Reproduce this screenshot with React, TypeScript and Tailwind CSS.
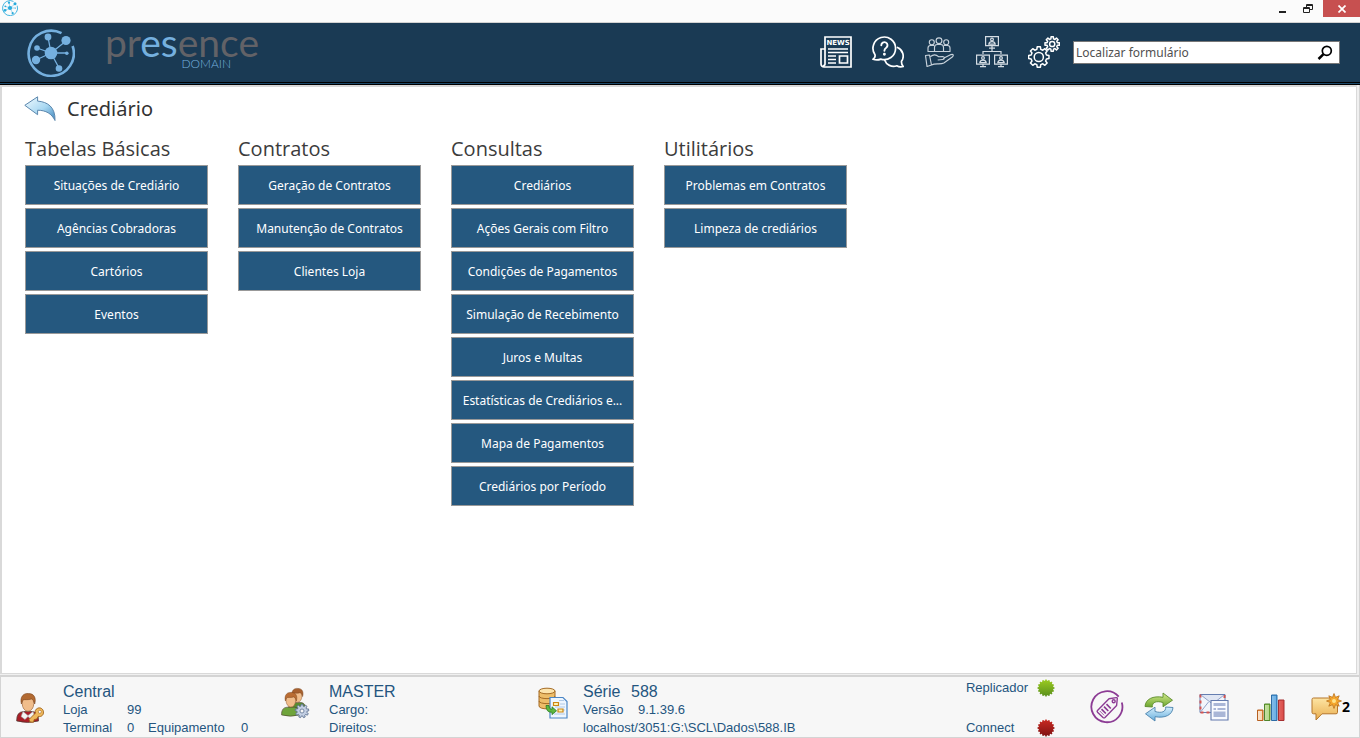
import React from "react";

const columns = [
  {
    title: "Tabelas Básicas",
    items: ["Situações de Crediário", "Agências Cobradoras", "Cartórios", "Eventos"],
  },
  {
    title: "Contratos",
    items: ["Geração de Contratos", "Manutenção de Contratos", "Clientes Loja"],
  },
  {
    title: "Consultas",
    items: [
      "Crediários",
      "Ações Gerais com Filtro",
      "Condições de Pagamentos",
      "Simulação de Recebimento",
      "Juros e Multas",
      "Estatísticas de Crediários e...",
      "Mapa de Pagamentos",
      "Crediários por Período",
    ],
  },
  {
    title: "Utilitários",
    items: ["Problemas em Contratos", "Limpeza de crediários"],
  },
];

function Emblem({ className, color }: { className: string; color: string }) {
  return (
    <svg viewBox="0 0 48 48" className={className} fill="none" stroke={color} aria-hidden="true">
      <path d="M34.5 4.2A22.6 22.6 0 1 0 45.6 17" strokeWidth="2.6" />
      <path d="M24 24 21 8M24 24 39 12M24 24 10 19M24 24 9 31M24 24 32 39M24 24H40" strokeWidth="1.3" />
      <g fill={color} stroke="none">
        <circle cx="24" cy="24" r="6.3" />
        <circle cx="21" cy="8" r="3.4" />
        <circle cx="39" cy="11.5" r="4.6" />
        <circle cx="10" cy="19" r="2.8" />
        <circle cx="9" cy="31" r="4.2" />
        <circle cx="32" cy="39.5" r="3.3" />
        <circle cx="39.8" cy="24.3" r="1.8" />
      </g>
    </svg>
  );
}

function NewsIcon() {
  return (
    <svg viewBox="0 0 32 32" className="size-8" fill="none" stroke="#fff" strokeWidth="1.7" aria-hidden="true">
      <path d="M5 28V1h26v30H4a3 3 0 0 1-3-3V13h4v15a1.5 1.5 0 0 1-2 1.5" />
      <path d="M8 13h20M8 16.5h20M8 20h8M8 23.5h8M8 27h8" strokeWidth="1.4" />
      <path d="M19.5 20h8v7h-8z" />
      <text x="18.2" y="9.3" textAnchor="middle" fill="#fff" stroke="none" fontFamily="DejaVu Sans, sans-serif" fontWeight="700" fontSize="7">NEWS</text>
    </svg>
  );
}

function HelpIcon() {
  return (
    <svg viewBox="0 0 32 32" className="size-8" fill="none" stroke="#fff" strokeWidth="1.7" strokeLinejoin="round" strokeLinecap="round" aria-hidden="true">
      <path d="M1 23.3c1.7-1.1 2.4-2.8 2-4.5a11.3 11.3 0 1 1 5.8 4.3c-2.3 1-5.2 1-7.8.2Z" />
      <path d="M25.5 11.5a9.2 9.2 0 0 1 4 13.8c-.2 2.4.5 4 1.8 5.2-2.5.7-4.6.4-6.5-.7a9.6 9.6 0 0 1-12.3-6" />
      <path d="M9.3 9.3a3.1 3.1 0 1 1 4.9 2.5c-1.2.8-1.8 1.5-1.8 3" strokeWidth="1.9" />
      <circle cx="12.4" cy="18.3" r=".6" fill="#fff" />
    </svg>
  );
}

function PartnersIcon() {
  return (
    <svg viewBox="0 0 32 32" className="size-8" fill="none" stroke="#c9d3dc" strokeWidth="1.15" strokeLinejoin="round" aria-hidden="true">
      <circle cx="15" cy="4.700" r="2.900" />
      <circle cx="7.800" cy="6.200" r="2.500" />
      <circle cx="22.200" cy="6.200" r="2.500" />
      <path d="M10.500 15.500v-4.200q0-2.800 3-2.800h3q3 0 3 2.800v4.200Z" />
      <path d="M10.500 15.500H4v-3.600q0-2.400 2.500-2.400h3.700M19.500 15.500H26v-3.600q0-2.400-2.500-2.400h-3.700" />
      <path d="M1.500 19.500l4-.5 2 10-4.500 1.500ZM6.500 20.500c3-2.300 6-1.800 8 .2l4-.2c2.500 0 2.300 2.800.2 3l-5 .5M19 22.400l8-3.800c2.500-.8 3 1.200 1.300 2.400l-8.500 6c-3.500 2-8.300-.3-12.300 2" />
    </svg>
  );
}

function Monitor({ x, y }: { x: number; y: number }) {
  return (
    <g transform={`translate(${x} ${y})`}>
      <path d="M.6.6h12.800v9H.6ZM4 12.200h6M7 9.600v2.600" />
      <circle cx="7" cy="3.500" r="1.400" />
      <path d="M3.800 8.200q.4-2.600 3.200-2.600t3.200 2.600Z" />
    </g>
  );
}

function NetworkIcon() {
  return (
    <svg viewBox="0 0 32 32" className="size-8" fill="none" stroke="#d5dde4" strokeWidth="1.2" aria-hidden="true">
      <Monitor x={9} y={0} />
      <Monitor x={0} y={18.5} />
      <Monitor x={18} y={18.5} />
      <path d="M16 12v3.300M7 18v-2.500h18V18" />
    </svg>
  );
}

function gearPath(cx: number, cy: number, outer: number, inner: number, teeth: number) {
  const step = (Math.PI * 2) / teeth;
  const point = (radius: number, angle: number) =>
    `${(cx + radius * Math.cos(angle)).toFixed(2)} ${(cy + radius * Math.sin(angle)).toFixed(2)}`;
  const parts: string[] = [];
  for (let i = 0; i < teeth; i += 1) {
    const a = i * step - Math.PI / 2;
    parts.push(
      point(inner, a - step * 0.32),
      point(outer, a - step * 0.2),
      point(outer, a + step * 0.2),
      point(inner, a + step * 0.32),
    );
  }
  return `M${parts.join("L")}Z`;
}

function GearsIcon() {
  return (
    <svg viewBox="0 0 32 32" className="size-8" fill="none" stroke="#fff" strokeWidth="1.5" strokeLinejoin="round" aria-hidden="true">
      <path d={gearPath(10.8, 21, 10.3, 7.9, 8)} />
      <circle cx="10.8" cy="21" r="4.6" />
      <path d={gearPath(24.2, 8, 7.3, 5.3, 8)} />
      <circle cx="24.2" cy="8" r="2.6" />
    </svg>
  );
}

function BackIcon() {
  return (
    <svg viewBox="0 0 32 26" className="h-[26px] w-8" aria-hidden="true">
      <defs>
        <linearGradient id="back" x1="0" y1="0" x2="1" y2="1">
          <stop offset="0" stopColor="#f2fbff" />
          <stop offset=".55" stopColor="#a9d8f2" />
          <stop offset="1" stopColor="#3f86bd" />
        </linearGradient>
      </defs>
      <path d="M.8 9.300 13.600.8v4.300C23.500 5.800 31.500 11 31 24.500 27.500 17.500 22 14.300 13.600 14.200v4.500Z" fill="url(#back)" stroke="#5c87ad" strokeWidth="1" strokeLinejoin="round" />
    </svg>
  );
}

function PersonShape({ hair, body }: { hair: string; body: string }) {
  return (
    <g>
      <path d="M.7 28q-.5-9 6.800-9.500h9q6.500.5 6 9.500-11 3-21.800 0Z" fill={body} stroke="#4b3a30" strokeWidth=".7" />
      <ellipse cx="12" cy="10.500" rx="5.800" ry="7.800" fill="#f0bd8b" stroke="#a0683c" strokeWidth=".7" />
      <path d="M5.400 11C3.500 3.500 8-.2 12.500.6c5.500-.3 8 4.400 6.200 10.400-.7-3-1.700-4.500-3.200-5-3.500 1.200-7 .3-8 .8-1 .7-1.600 2-2.100 4.200Z" fill={hair} stroke="#7a4219" strokeWidth=".6" />
    </g>
  );
}

function UserKeyIcon() {
  return (
    <svg viewBox="0 0 30 32" className="h-8 w-[30px]" aria-hidden="true">
      <g transform="translate(1 2)"><PersonShape hair="#b26a32" body="#a91d27" /></g>
      <path d="m8 20.500 5 4 5-4 2 5-4 3-3-3-3 3-4-3Z" fill="#f4f4f4" stroke="#999" strokeWidth=".6" />
      <path d="M20.500 22 14 28.500l1 2.500 3.500.2.700-2.700 2.500-.4 1.500-2.700c3.200.8 5.600-1.500 5.300-4.600-.4-3-3.200-4.800-5.900-3.500-2.300 1-2.800 3-2.100 4.700Z" fill="#eeb85c" stroke="#9f6219" strokeWidth=".9" />
      <circle cx="24.800" cy="20.800" r="1.500" fill="#fff" stroke="#9f6219" strokeWidth=".6" />
    </svg>
  );
}

function UsersIcon() {
  return (
    <svg viewBox="0 0 30 32" className="h-8 w-[30px]" aria-hidden="true">
      <g transform="translate(8 1) scale(.78)"><PersonShape hair="#a7602e" body="#578b2f" /></g>
      <g transform="translate(1 5) scale(.82)"><PersonShape hair="#ba6d33" body="#6fa43b" /></g>
      <path d={gearPath(22, 24, 6.8, 5, 9)} fill="#c3cfe3" stroke="#607493" strokeWidth=".9" />
      <circle cx="22" cy="24" r="2" fill="#f7f7f7" stroke="#607493" strokeWidth=".8" />
    </svg>
  );
}

function DatabaseIcon() {
  return (
    <svg viewBox="0 0 30 32" className="h-8 w-[30px]" aria-hidden="true">
      <path d="M1 4v15c0 3.800 16 3.800 16 0V4Z" fill="#edbd69" stroke="#a56b24" />
      <ellipse cx="9" cy="4" rx="8" ry="2.800" fill="#fce4ad" stroke="#a56b24" />
      <path d="M1 9c0 3.500 16 3.500 16 0M1 14c0 3.500 16 3.500 16 0" fill="none" stroke="#a56b24" />
      <path d="M12 10.500h13l4 4V31H12Z" fill="#eef6ff" stroke="#4b86c6" strokeWidth="1.2" />
      <path d="M21 13.500h5M22 17h5M17 20h10M22 23h5M16 27h11" stroke="#9fbfe1" strokeWidth=".8" />
      <path d="M15.500 15.500h5v3h-5ZM20 22h5v3h-5Z" fill="#fff2b1" stroke="#cc8612" strokeWidth="1.2" />
      <path d="M8 18.500h3q.2 4 3 3.800v-2.500l4.500 4-4.500 3.800v-2.300Q8 25.500 8 18.500Z" fill="#5eb83f" stroke="#267a22" strokeWidth=".8" />
    </svg>
  );
}

function StatusDot({ light, dark, id, label }: { light: string; dark: string; id: string; label: string }) {
  return (
    <svg viewBox="0 0 18 18" className="size-[18px]" role="img" aria-label={label}>
      <defs>
        <linearGradient id={id} x1="0" y1="0" x2="0" y2="1">
          <stop offset="0" stopColor={light} />
          <stop offset="1" stopColor={dark} />
        </linearGradient>
      </defs>
      <path d={gearPath(9, 9, 8.5, 7.4, 16)} fill={`url(#${id})`} />
    </svg>
  );
}

function TagIcon() {
  return (
    <svg viewBox="0 0 34 34" className="size-[34px]" fill="none" stroke="#8c3b94" strokeWidth="1.4" strokeLinejoin="round" aria-hidden="true">
      <path d="M28.700 6.700A15.500 15.500 0 1 0 31.800 12.500" strokeWidth="1.800" />
      <path d="M7.500 20.500 19 8.800l7.300-1.200q1-.1 1 .9l-.7 7L15 27.500q-1 .8-2 0l-5.500-5.300q-.8-.8 0-1.700Z" />
      <circle cx="23.700" cy="11.300" r="1.500" />
      <path d="m11.500 19.200 4.300 4.300M14 16.700l4.300 4.300M16.500 14.200l4.300 4.300" strokeWidth="1.700" />
      <path d="m9.800 21 4.300 4.300" strokeWidth=".8" />
    </svg>
  );
}

function SyncIcon() {
  return (
    <svg viewBox="0 0 30 30" className="size-[30px]" aria-hidden="true">
      <defs>
        <linearGradient id="sync-green" x1="0" y1="0" x2="0" y2="1">
          <stop offset="0" stopColor="#d6ec8f" /><stop offset="1" stopColor="#6ca52d" />
        </linearGradient>
        <linearGradient id="sync-blue" x1="0" y1="0" x2="0" y2="1">
          <stop offset="0" stopColor="#d6effc" /><stop offset="1" stopColor="#67aedd" />
        </linearGradient>
      </defs>
      <path d="M1 14.500C1.500 7 9 3.500 19 5.300V1l9.500 7.200-9.500 6.600v-4.300C12 8.500 8 10.300 8.300 15Z" fill="url(#sync-green)" stroke="#5c8c2c" strokeWidth=".9" strokeLinejoin="round" />
      <path d="M29 15.500C28.500 23 21 26.500 11 24.700V29l-9.500-7.200 9.500-6.600v4.300c7 2 11 .2 10.700-4.500Z" fill="url(#sync-blue)" stroke="#4b82ad" strokeWidth=".9" strokeLinejoin="round" />
    </svg>
  );
}

function MailIcon() {
  return (
    <svg viewBox="0 0 30 28" className="h-7 w-[30px]" aria-hidden="true">
      <path d="M1 1.500h25v18H1Z" fill="#f3f5fb" stroke="#657eb1" strokeWidth="1" />
      <path d="M1.500 1.500v18h10M25.500 2v6" fill="none" stroke="#d65450" strokeWidth="2" strokeDasharray="3 3" />
      <path d="m2 2 11.500 9L25 2M2 18.500l7.500-9.500" fill="#e0e6f3" stroke="#8799c3" strokeWidth=".9" />
      <path d="M12 7.500h17V27H12Z" fill="#f8faff" stroke="#6279ad" strokeWidth="1.1" />
      <path d="M14.500 10h12v3h-12ZM14.500 15h2.500v2h-2.500ZM18.500 15h8v2h-8ZM14.500 18.500h12v5.500h-12Z" fill="#a9b6d7" />
    </svg>
  );
}

function ChartIcon() {
  return (
    <svg viewBox="0 0 28 27" className="h-[27px] w-7" aria-hidden="true">
      <defs>
        <linearGradient id="bar-shade"><stop offset="0" stopColor="#fff" stopOpacity=".75" /><stop offset="1" stopColor="#fff" stopOpacity="0" /></linearGradient>
      </defs>
      <path d="M.5 16h5.500v10.500H.5Z" fill="#f19539" stroke="#b66022" />
      <path d="M7.500 10H13v16.500H7.500Z" fill="#83bd36" stroke="#4f842c" />
      <path d="M14.500 1H20v25.500h-5.500Z" fill="#459ade" stroke="#2d6ca6" />
      <path d="M21.500 6H27v20.500h-5.500Z" fill="#dc4f4b" stroke="#a52e30" />
      <path d="M1 17h4v9H1ZM8 11h4v15H8ZM15 2h4v24h-4ZM22 7h4v19h-4Z" fill="url(#bar-shade)" />
    </svg>
  );
}

function MessageIcon() {
  return (
    <svg viewBox="0 0 31 28" className="h-7 w-[31px]" aria-hidden="true">
      <defs>
        <linearGradient id="message" x1="0" y1="0" x2="0" y2="1"><stop offset="0" stopColor="#fde5a4" /><stop offset="1" stopColor="#e9ad4f" /></linearGradient>
      </defs>
      <path d="M1 6.500q0-1.500 1.500-1.500h22.500q1.500 0 1.500 1.500v12.800q0 1.500-1.500 1.500H11l-6 6.200v-6.200H2.500Q1 20.800 1 19.300Z" fill="url(#message)" stroke="#b5762b" strokeWidth="1" />
      <path d="M23 .5l1.500 3.800 3.700-1.500-1.500 3.700 3.800 1.500-3.800 1.500 1.500 3.700-3.700-1.500L23 15.500l-1.500-3.800-3.700 1.500 1.500-3.700L15.500 8l3.800-1.500-1.500-3.700 3.700 1.500Z" fill="#f5a72e" stroke="#bd721c" strokeWidth=".8" />
      <circle cx="23" cy="8" r="2" fill="#ffe489" />
    </svg>
  );
}

function TitleBar() {
  return (
    <div className="flex h-[23px] items-start justify-between border-b border-[#d2d2d2] bg-[#fbfbfb]">
      <Emblem className="ml-0.5 size-4" color="#2aabdc" />
      <div className="flex">
        <button aria-label="Minimizar" className="flex h-[17px] w-[27px] items-center justify-center">
          <svg viewBox="0 0 8 8" className="size-2"><path d="M0 6h7v2H0z" fill="#222" /></svg>
        </button>
        <button aria-label="Restaurar" className="flex h-[17px] w-[27px] items-center justify-center pr-1">
          <svg viewBox="0 0 10 9" className="h-[9px] w-2.5" fill="none" stroke="#222"><path d="M3.500 3V.5h6v5H7M3 1.500h7M.5 3.500h6v5h-6ZM0 4.500h7" /></svg>
        </button>
        <button aria-label="Fechar" className="flex h-[17px] w-[37px] items-center justify-center bg-[#c75050]">
          <svg viewBox="0 0 8 8" className="size-2" fill="none" stroke="#fff" strokeWidth="1.700"><path d="m.5.5 7 7M7.500.5l-7 7" /></svg>
        </button>
      </div>
    </div>
  );
}

function Header() {
  return (
    <header className="border-b border-black bg-[#1a3a54]">
      <div className="flex h-[60px] items-center justify-between border-b border-black pr-5 pl-[27px]">
        <div className="flex items-center gap-[30px]">
          <Emblem className="size-12" color="#75b0df" />
          <div className="flex flex-col items-end pb-2 font-['Lato'] text-[#75b0df]">
            <span className="text-[39px] leading-[30px] text-[#626267]">
              pr<span className="text-[#75b0df]">es</span>ence
            </span>
            <span className="pr-7 text-xs leading-[14px] font-light">DOMAIN</span>
          </div>
        </div>
        <div className="flex items-center">
          <nav className="flex gap-5 pr-[13px] pb-0.5" aria-label="Atalhos">
            <button aria-label="Notícias"><NewsIcon /></button>
            <button aria-label="Ajuda"><HelpIcon /></button>
            <button aria-label="Parceiros"><PartnersIcon /></button>
            <button aria-label="Rede"><NetworkIcon /></button>
            <button aria-label="Configurações"><GearsIcon /></button>
          </nav>
          <div className="flex h-[23px] w-[267px] items-center border border-[#777] bg-white pr-1.5">
            <input
              aria-label="Localizar formulário"
              placeholder="Localizar formulário"
              className="min-w-0 flex-1 px-0.5 text-xs outline-none placeholder:text-[#505050]"
            />
            <button aria-label="Pesquisar">
              <svg viewBox="0 0 16 16" className="size-4" fill="none" stroke="#000"><circle cx="9.800" cy="5.800" r="4.500" strokeWidth="1.700" /><path d="M6.500 9.200 1.500 14" strokeWidth="2.500" /></svg>
            </button>
          </div>
        </div>
      </div>
      <div className="h-px bg-[#1b4a6c]" />
    </header>
  );
}

function StatusBar() {
  return (
    <footer className="border-x border-t-2 border-b border-[#d4d4d4] bg-[#f7f7f7] font-['Liberation_Sans',sans-serif] text-[13px] leading-[18px] text-[#24557f]">
      <div className="flex h-[60px] items-center">
        <section className="flex w-[265px] items-center pl-3.5">
          <UserKeyIcon />
          <div className="pt-1.5 pl-[18px]">
            <p className="text-base leading-[18px]">Central</p>
            <p className="flex"><span className="w-16">Loja</span>99</p>
            <p className="flex"><span className="w-16">Terminal</span><span className="w-[21px]">0</span><span className="w-[93px]">Equipamento</span>0</p>
          </div>
        </section>
        <section className="flex w-[254px] items-center pl-3.5">
          <div className="pb-2"><UsersIcon /></div>
          <div className="pt-1.5 pl-[19px]">
            <p className="text-base leading-[18px]">MASTER</p>
            <p>Cargo:</p>
            <p>Direitos:</p>
          </div>
        </section>
        <section className="flex items-center pl-[18px]">
          <div className="pb-2"><DatabaseIcon /></div>
          <div className="pt-1.5 pl-[15px]">
            <p className="flex text-base leading-[18px]"><span className="w-12">Série</span>588</p>
            <p className="flex"><span className="w-[55px]">Versão</span>9.1.39.6</p>
            <p>localhost/3051:G:\SCL\Dados\588.IB</p>
          </div>
        </section>
        <section className="ml-auto flex h-full flex-col justify-between pt-0.5">
          <p className="flex items-center"><span className="w-[71px]">Replicador</span><StatusDot id="dot-on" light="#9ccb20" dark="#598f1c" label="Ativo" /></p>
          <p className="flex items-center"><span className="w-[71px]">Connect</span><StatusDot id="dot-off" light="#c92a22" dark="#7e1111" label="Inativo" /></p>
        </section>
        <div className="flex items-center pr-[9px] pl-[35px]">
          <button aria-label="Etiquetas"><TagIcon /></button>
          <button aria-label="Sincronizar" className="ml-5"><SyncIcon /></button>
          <button aria-label="Correio" className="ml-[25px]"><MailIcon /></button>
          <button aria-label="Gráficos" className="ml-7"><ChartIcon /></button>
          <button aria-label="Mensagens" className="ml-[26px] flex items-center font-['Open_Sans'] text-sm font-bold text-black"><MessageIcon />2</button>
        </div>
      </div>
    </footer>
  );
}

export default function App() {
  return (
    <div className="flex min-h-screen flex-col bg-[#f0f0f0] font-['Noto_Sans',sans-serif]">
      <TitleBar />
      <Header />
      <div className="flex flex-1 flex-col border-r border-[#d4d4d4] pr-0.5 pb-px">
        <main className="flex-1 border-t-2 border-r border-b border-l-2 border-[#d9d9d9] bg-white pb-6 pl-[23px]">
          <div className="-ml-px flex h-11 items-center">
            <button aria-label="Voltar"><BackIcon /></button>
            <h1 className="pl-[11px] text-xl text-[#333]">Crediário</h1>
          </div>
          <div className="flex gap-[30px]">
            {columns.map((column) => (
              <section key={column.title} className="w-[183px]">
                <h2 className="h-[34px] font-['Open_Sans'] text-xl leading-9 text-[#3c3c3c]">{column.title}</h2>
                <div className="flex flex-col gap-[3px]">
                  {column.items.map((item) => (
                    <button key={item} className="h-10 truncate border border-[#999] bg-[#25587f] px-1 pt-0.5 text-xs text-white">
                      {item}
                    </button>
                  ))}
                </div>
              </section>
            ))}
          </div>
        </main>
      </div>
      <StatusBar />
    </div>
  );
}
